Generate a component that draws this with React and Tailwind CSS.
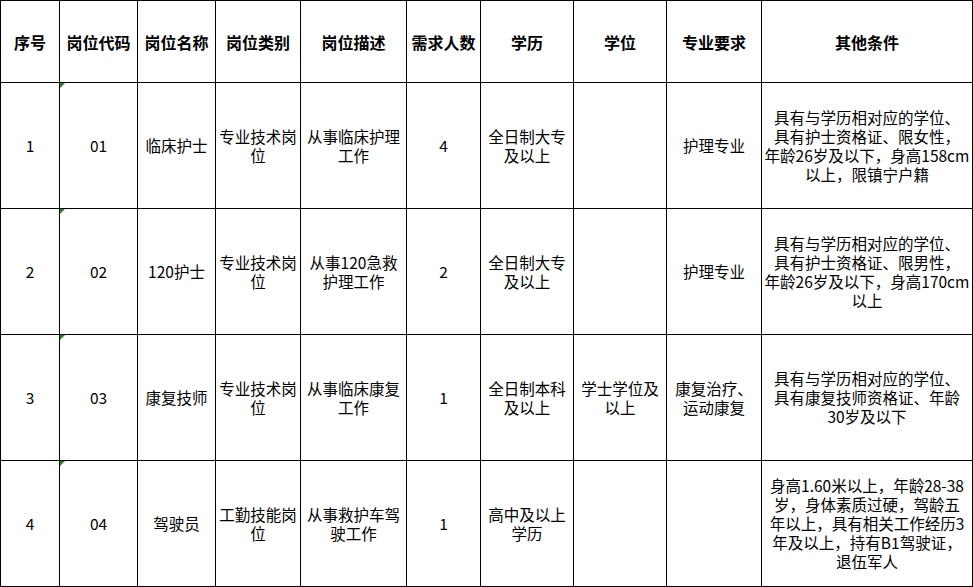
import React from 'react';

const headers = ['序号', '岗位代码', '岗位名称', '岗位类别', '岗位描述', '需求人数', '学历', '学位', '专业要求', '其他条件'];

// each cell is a list of lines, kept as in the sheet
const rows = [
    [
        ['1'], ['01'], ['临床护士'], ['专业技术岗', '位'], ['从事临床护理', '工作'], ['4'],
        ['全日制大专', '及以上'], [], ['护理专业'],
        ['具有与学历相对应的学位、', '具有护士资格证、限女性，', '年龄26岁及以下，身高158cm', '以上，限镇宁户籍'],
    ],
    [
        ['2'], ['02'], ['120护士'], ['专业技术岗', '位'], ['从事120急救', '护理工作'], ['2'],
        ['全日制大专', '及以上'], [], ['护理专业'],
        ['具有与学历相对应的学位、', '具有护士资格证、限男性，', '年龄26岁及以下，身高170cm', '以上'],
    ],
    [
        ['3'], ['03'], ['康复技师'], ['专业技术岗', '位'], ['从事临床康复', '工作'], ['1'],
        ['全日制本科', '及以上'], ['学士学位及', '以上'], ['康复治疗、', '运动康复'],
        ['具有与学历相对应的学位、', '具有康复技师资格证、年龄', '30岁及以下'],
    ],
    [
        ['4'], ['04'], ['驾驶员'], ['工勤技能岗', '位'], ['从事救护车驾', '驶工作'], ['1'],
        ['高中及以上', '学历'], [], [],
        ['身高1.60米以上，年龄28-38', '岁，身体素质过硬，驾龄五', '年以上，具有相关工作经历3', '年及以上，持有B1驾驶证，', '退伍军人'],
    ],
];

const App = () => {
    return (
        <div className="w-[973px] h-[587px] bg-white text-black overflow-hidden" style={{ fontFamily: '"Noto Sans CJK SC", "Noto Sans", sans-serif' }}>
            <div className="grid grid-cols-[59px_78px_78px_85px_106px_74px_93px_93px_95px_211px] grid-rows-[82px_126px_126px_126px_126px] border-l border-t border-black">
                {headers.map((h) => (
                    <div key={h} className="flex items-center justify-center border-r border-b border-black text-[16px] font-bold whitespace-nowrap">
                        {h}
                    </div>
                ))}
                {rows.map((row, ri) =>
                    row.map((cell, ci) => (
                        <div
                            key={ri + '-' + ci}
                            className="relative flex flex-col items-center justify-center border-r border-b border-black text-[15.5px] leading-[19px] whitespace-nowrap"
                        >
                            {ci === 1 && (
                                <span className="absolute left-0 top-0 w-0 h-0 border-t-[5px] border-r-[5px] border-t-[#2f7d32] border-r-transparent"></span>
                            )}
                            {cell.map((line, li) => (
                                <span key={li}>{line}</span>
                            ))}
                        </div>
                    ))
                )}
            </div>
        </div>
    );
};

export default App;
